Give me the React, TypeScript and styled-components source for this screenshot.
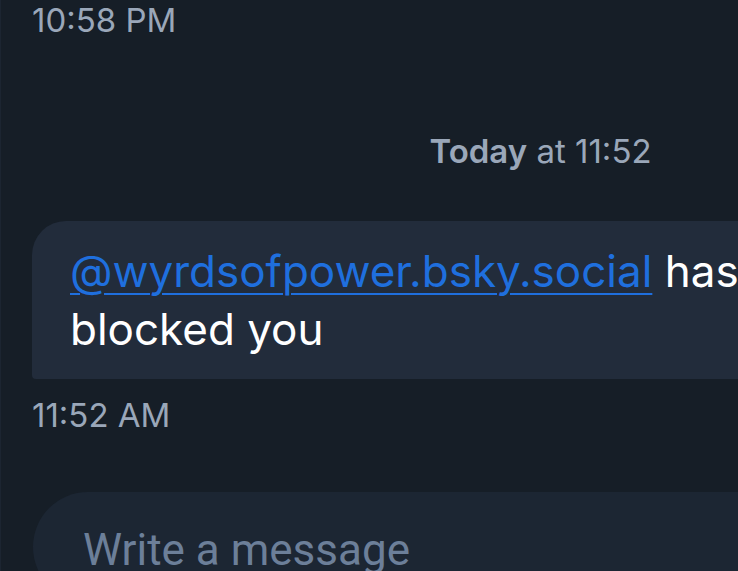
import React from "react";
import styled, { createGlobalStyle } from "styled-components";

const Global = createGlobalStyle`
  html, body { margin: 0; padding: 0; background: #161e27; }
  #root { width: 738px; height: 571px; overflow: hidden; }
`;

const Screen = styled.div`
  width: 738px;
  height: 571px;
  overflow: hidden;
  background: #161e27;
  border-left: 1px solid #1c2531;
  box-sizing: border-box;
`;

const Column = styled.div`
  width: 1080px;
  display: flex;
  flex-direction: column;
  padding: 0 0 0 31px;
  box-sizing: border-box;
`;

const Stamp = styled.div<{ $top?: number }>`
  font-family: Inter, "Liberation Sans", sans-serif;
  font-size: 33px;
  line-height: 40px;
  color: #9aa7b9;
  margin-top: ${(p) => p.$top ?? 0}px;
`;

const DateSep = styled.div`
  font-family: Inter, "Liberation Sans", sans-serif;
  font-size: 33px;
  line-height: 40px;
  color: #9aa7b9;
  text-align: center;
  margin: 91px 0 0 -32px;
  b { font-weight: 600; }
`;

const Bubble = styled.div`
  margin-top: 50px;
  background: #222c3b;
  border-radius: 34px 34px 34px 4px;
  padding: 21px 0 21px 38px;
  font-family: Inter, "Liberation Sans", sans-serif;
  font-size: 44px;
  line-height: 58px;
  color: #ffffff;
  width: 830px;
  box-sizing: border-box;
`;

const Mention = styled.a`
  color: #1f6fde;
  text-decoration: underline;
  text-underline-offset: 6px;
  text-decoration-thickness: 2px;
`;

const Composer = styled.div`
  margin-top: 57px;
  margin-left: 1px;
  background: #1c2633;
  border-radius: 55px;
  height: 110px;
  padding: 30px 0 0 50px;
  box-sizing: border-box;
  font-family: Roboto, "Liberation Sans", sans-serif;
  font-size: 44px;
  line-height: 56px;
  color: #6c7f99;
`;

export default function App() {
  return (
    <Screen>
      <Global />
      <Column>
        <Stamp>10:58 PM</Stamp>
        <DateSep>
          <b>Today</b> at 11:52
        </DateSep>
        <Bubble>
          <Mention>@wyrdsofpower.bsky.social</Mention> has blocked you
        </Bubble>
        <Stamp $top={16}>11:52 AM</Stamp>
        <Composer>Write a message</Composer>
      </Column>
    </Screen>
  );
}
